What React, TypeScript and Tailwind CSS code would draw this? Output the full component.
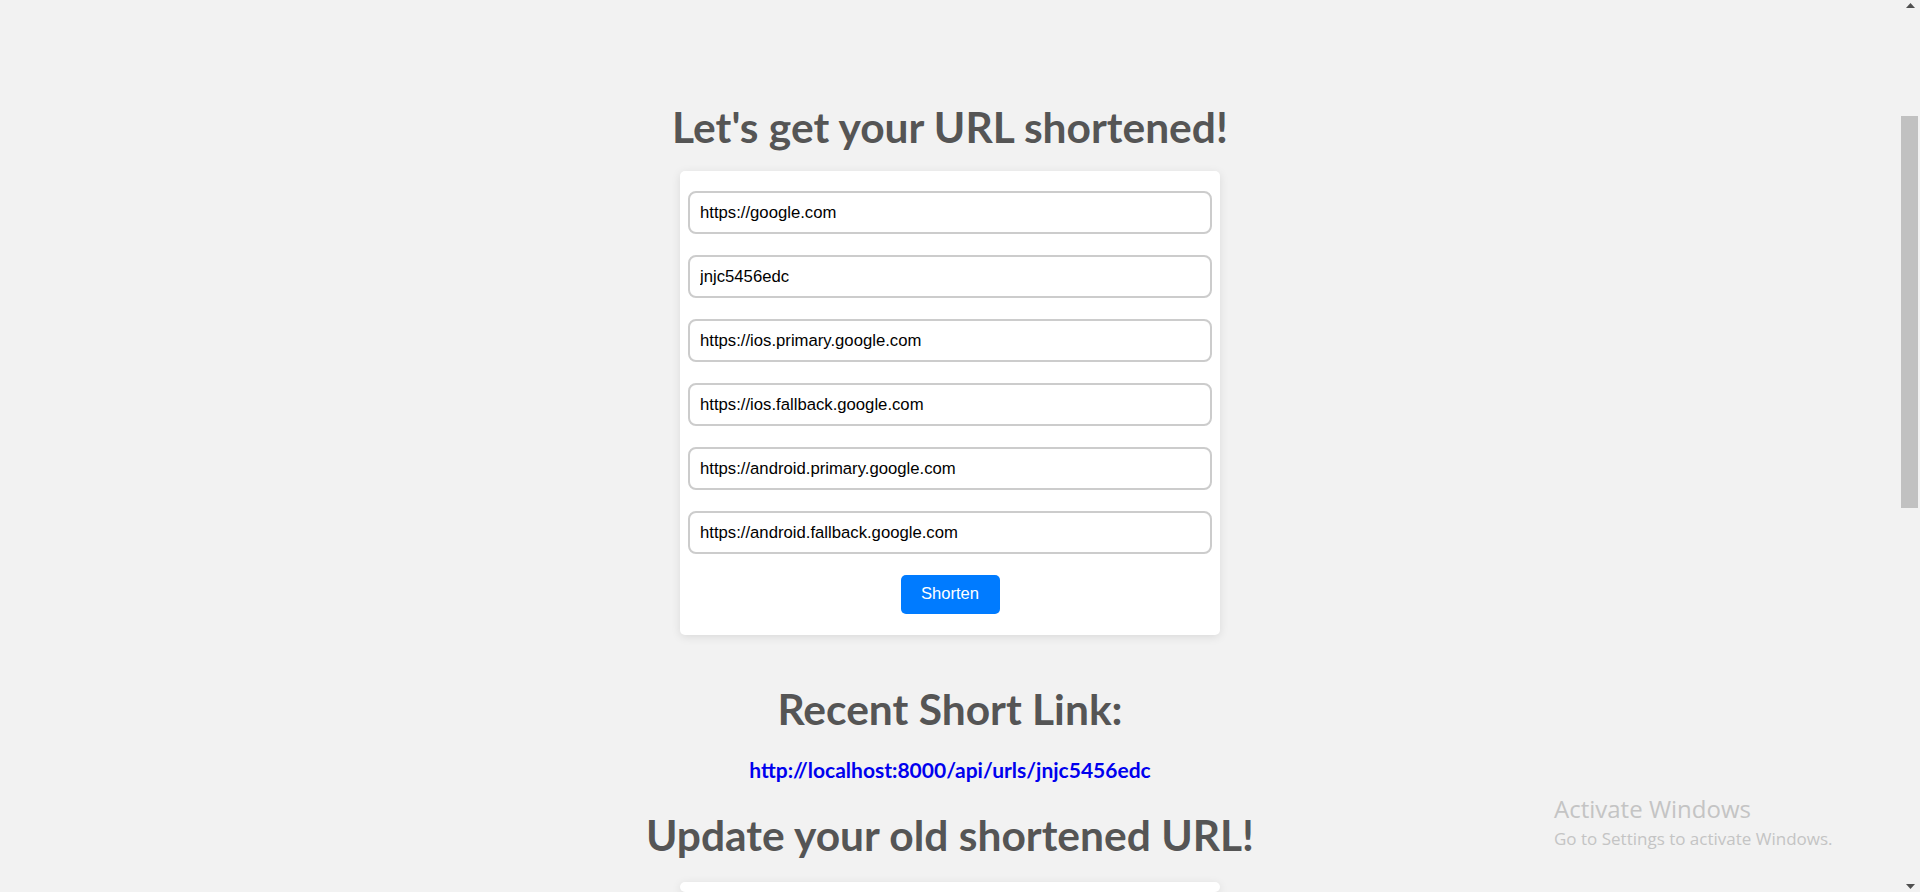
import React from 'react';

const fields = [
  'https://google.com',
  'jnjc5456edc',
  'https://ios.primary.google.com',
  'https://ios.fallback.google.com',
  'https://android.primary.google.com',
  'https://android.fallback.google.com',
];

const headingFont = { fontFamily: 'Lato, "Open Sans", sans-serif' };
const inputFont = { fontFamily: '"Liberation Sans", Arial, sans-serif' };

function Scrollbar() {
  return (
    <div className="w-[20px] h-full flex flex-col items-start bg-[#f2f2f2]">
      <div className="w-full flex justify-center pt-[3px] pl-[1px]">
        <svg width="9" height="5" viewBox="0 0 9 5">
          <polygon points="4.5,0 9,5 0,5" fill="#505050" />
        </svg>
      </div>
      <div className="mt-[108px] ml-[1px] w-[17px] h-[392px] bg-[#c1c1c1]" />
      <div className="flex-1" />
      <div className="w-full flex justify-center pb-[3px] pl-[1px]">
        <svg width="9" height="5" viewBox="0 0 9 5">
          <polygon points="0,0 9,0 4.5,5" fill="#505050" />
        </svg>
      </div>
    </div>
  );
}

export default function App() {
  return (
    <div className="relative w-full h-screen overflow-hidden bg-[#f2f2f2] flex">
      <main className="flex-1 flex flex-col items-center">
        <h1
          className="mt-[101px] text-[42.5px] leading-[51px] font-bold text-[#555555]"
          style={headingFont}
        >
          Let's get your URL shortened!
        </h1>

        <form className="mt-[19px] w-[540px] bg-white rounded-[5px] shadow-[0_2px_10px_rgba(0,0,0,0.1)] px-[8px] pt-[20px] pb-[21px] flex flex-col items-center">
          <div className="w-full flex flex-col gap-[21px]">
            {fields.map((value) => (
              <input
                key={value}
                defaultValue={value}
                className="w-full h-[43px] px-[10px] border-2 border-[#cccccc] rounded-[8px] text-[16.7px] text-black bg-white outline-none"
                style={inputFont}
              />
            ))}
          </div>
          <button
            type="button"
            className="mt-[21px] h-[39px] w-[99px] bg-[#007bff] text-white text-[16.6px] rounded-[5px]"
            style={inputFont}
          >
            Shorten
          </button>
        </form>

        <h2
          className="mt-[48px] text-[42.5px] leading-[51px] font-bold text-[#555555]"
          style={headingFont}
        >
          Recent Short Link:
        </h2>
        <a
          href="#"
          className="mt-[23px] text-[21px] leading-[25px] font-bold text-[#0000ee]"
          style={headingFont}
        >
          http://localhost:8000/api/urls/jnjc5456edc
        </a>

        <h2
          className="mt-[27px] text-[42.5px] leading-[51px] font-bold text-[#555555]"
          style={headingFont}
        >
          Update your old shortened URL!
        </h2>
        <div className="mt-[22px] w-[540px] h-[120px] bg-white rounded-[5px] shadow-[0_2px_10px_rgba(0,0,0,0.1)]" />
      </main>

      <Scrollbar />

      <div
        className="absolute left-[1554px] top-[794px] text-[#c4c4c4] pointer-events-none"
        style={{ fontFamily: '"Open Sans", sans-serif' }}
      >
        <div className="text-[24px] leading-[30px]">Activate Windows</div>
        <div className="text-[17px] leading-[30px]">Go to Settings to activate Windows.</div>
      </div>
    </div>
  );
}
